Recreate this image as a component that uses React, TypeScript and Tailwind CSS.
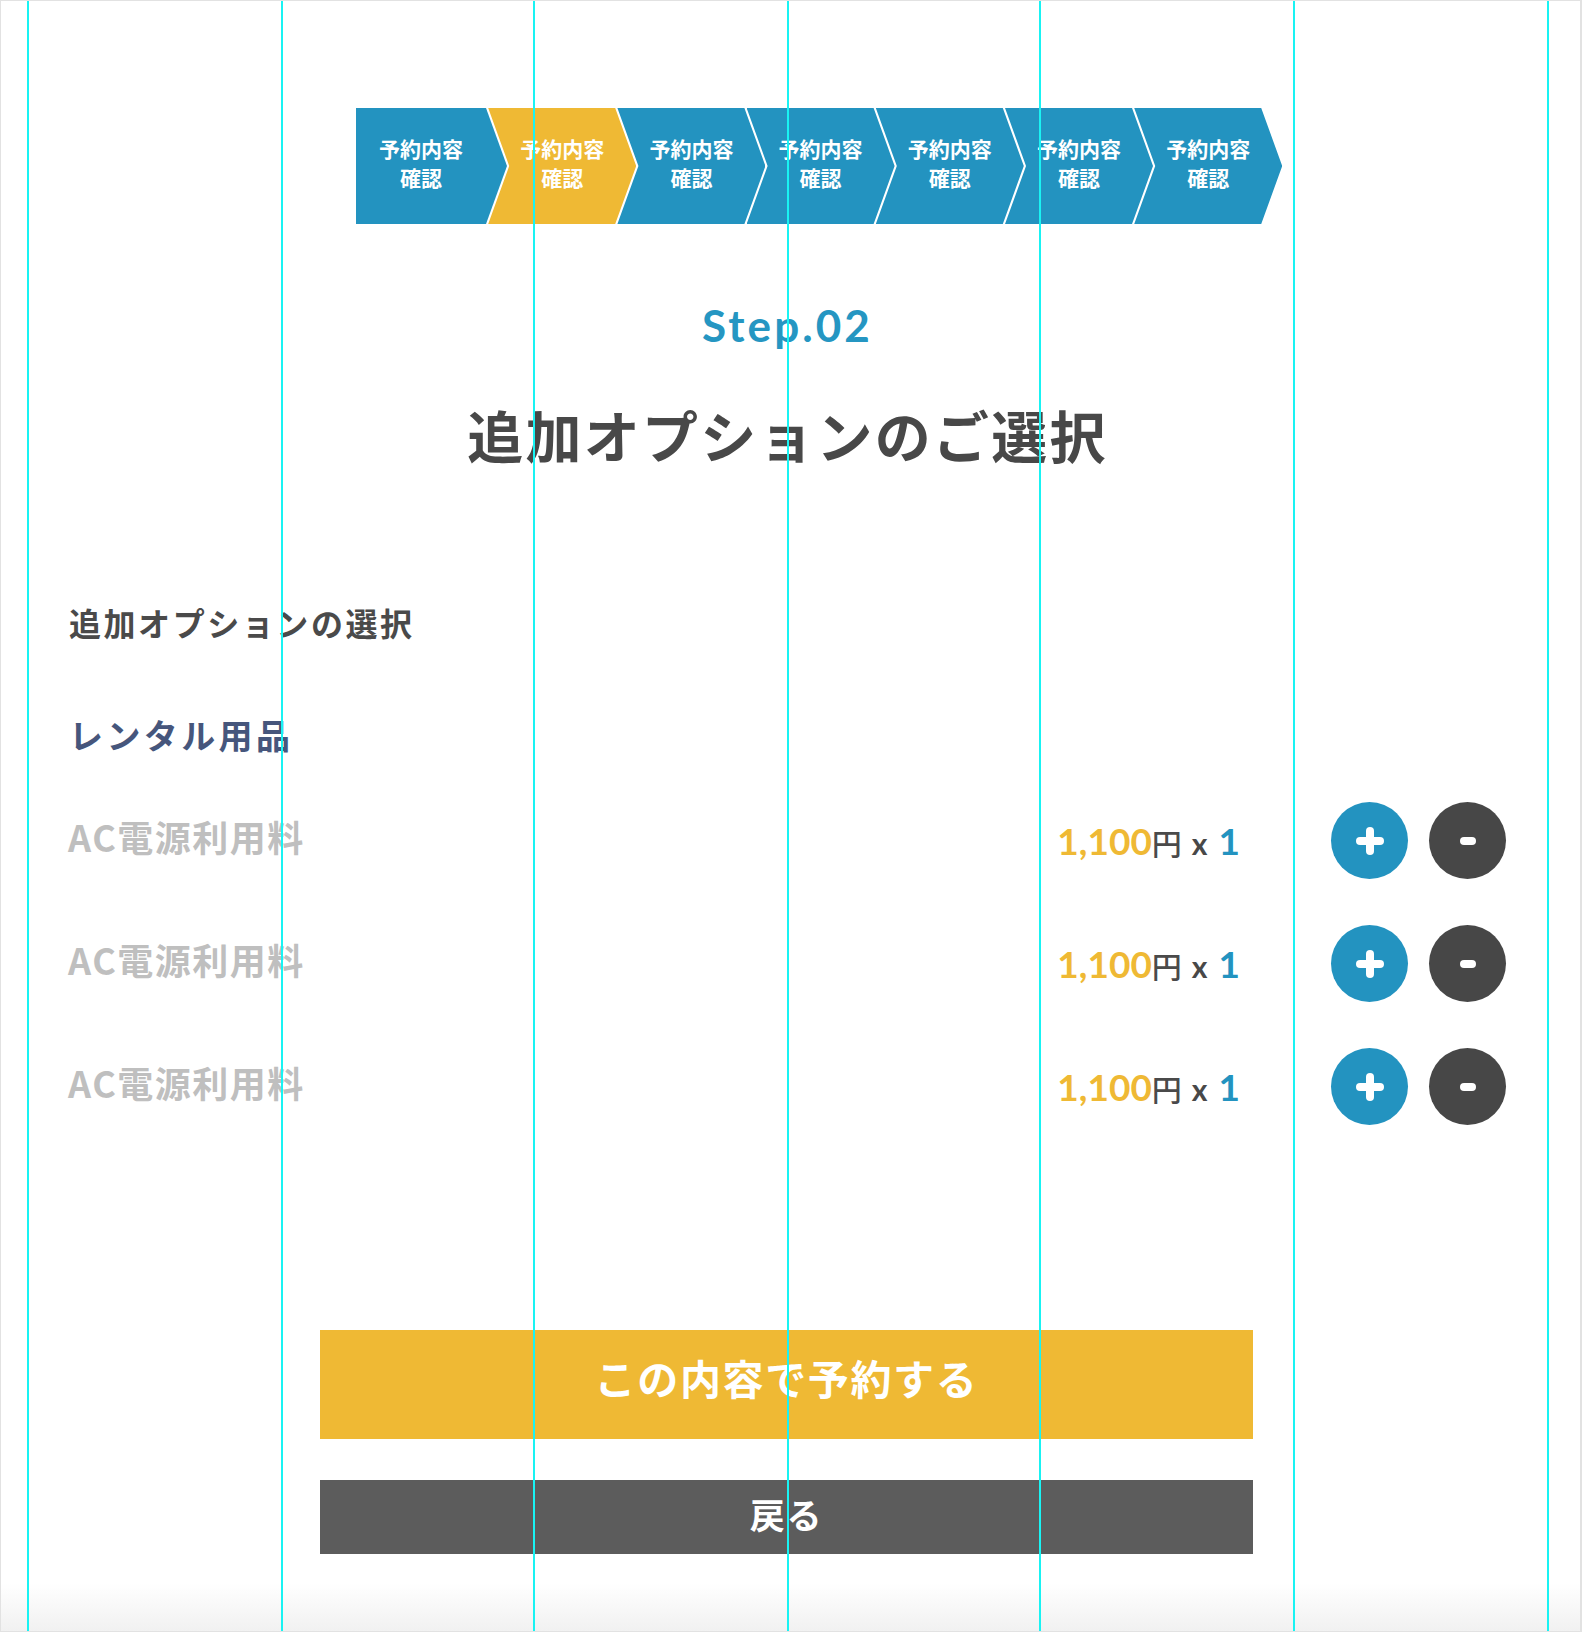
import React from 'react'

const jp = "font-['Noto_Sans_CJK_JP','Noto_Sans',sans-serif]"
const num = "font-['Lato','Noto_Sans_CJK_JP',sans-serif]"

// guide lines, offsets measured inside the 1px frame border
const guides = [26, 280, 532, 786, 1038, 1292, 1546]

const options = [
  { label: 'AC電源利用料', price: '1,100', qty: 1 },
  { label: 'AC電源利用料', price: '1,100', qty: 1 },
  { label: 'AC電源利用料', price: '1,100', qty: 1 },
]

function Stepper() {
  const steps = [0, 1, 2, 3, 4, 5, 6]
  return (
    <div className="flex h-[116px] ml-[355px] mt-[107px]">
      {steps.map((i) =>
        i === 0 ? (
          <div
            key={i}
            className={`w-[151px] h-full shrink-0 flex items-center justify-center pr-[21px] pb-[7px] bg-[#2393c0] [clip-path:polygon(0_0,130px_0,151px_50%,130px_100%,0_100%)] ${jp}`}
          >
            <span className="text-white text-[21px] leading-[29px] font-bold text-center">
              予約内容
              <br />
              確認
            </span>
          </div>
        ) : (
          <div
            key={i}
            className={`w-[148px] h-full shrink-0 -ml-[18.8px] flex items-center justify-center px-[21px] pb-[7px] ${
              i === 1 ? 'bg-[#efb934]' : 'bg-[#2393c0]'
            } [clip-path:polygon(0_0,127px_0,148px_50%,127px_100%,0_100%,21px_50%)] ${jp}`}
          >
            <span className="text-white text-[21px] leading-[29px] font-bold text-center">
              予約内容
              <br />
              確認
            </span>
          </div>
        )
      )}
    </div>
  )
}

function OptionRow({ label, price, qty }: { label: string; price: string; qty: number }) {
  return (
    <div className="flex items-center justify-between h-[77px]">
      <span className={`-ml-[1px] pb-[9px] text-[36px] leading-none font-bold tracking-[1.5px] text-[#bfbfbf] ${jp}`}>{label}</span>
      <div className="flex items-center">
        <div className="flex items-baseline">
          <span className={`text-[37px] leading-none font-bold text-[#efb934] ${num}`}>{price}</span>
          <span className={`text-[30px] leading-none font-medium text-[#4a4a4a] ${jp}`}>円</span>
          <span className={`ml-[10px] text-[30px] leading-none font-bold text-[#484848] ${num}`}>x</span>
          <span className={`ml-[11px] text-[37px] leading-none font-bold text-[#2393c0] ${num}`}>{qty}</span>
        </div>
        <div className="flex items-center gap-[21px] ml-[91px]">
          <button className="w-[77px] h-[77px] rounded-full bg-[#2393c0] flex items-center justify-center relative">
            <span className="absolute w-[28px] h-[8px] rounded-full bg-white" />
            <span className="absolute w-[8px] h-[28px] rounded-full bg-white" />
          </button>
          <button className="w-[77px] h-[77px] rounded-full bg-[#474747] flex items-center justify-center">
            <span className="w-[16px] h-[8px] rounded-full bg-white" />
          </button>
        </div>
      </div>
    </div>
  )
}

export default function App() {
  return (
    <div className="relative w-[1582px] h-[1632px] bg-white border-t border-l border-r-2 border-b border-[#e2e2e2] overflow-hidden">
      {/* bottom fade */}
      <div className="absolute left-0 right-0 bottom-0 h-[48px] bg-gradient-to-b from-white to-[#f1f1f1]" />

      <div className="relative">
        <Stepper />

        <p className={`mt-[79px] ml-[-6px] text-center text-[44px] leading-[44px] font-bold tracking-[0.07em] text-[#2596c2] ${num}`}>
          Step.02
        </p>

        <h1 className={`mt-[59px] ml-[-6px] text-center text-[56px] leading-[56px] font-bold tracking-[0.04em] text-[#484848] ${jp}`}>
          追加オプションのご選択
        </h1>

        <div className="ml-[68px] w-[1437px]">
          <h2 className={`mt-[144px] text-[32px] leading-[32px] font-bold tracking-[0.08em] text-[#4a4a4a] ${jp}`}>
            追加オプションの選択
          </h2>
          <h3 className={`mt-[80px] text-[34px] leading-[34px] font-bold tracking-[0.1em] text-[#46567c] ${jp}`}>
            レンタル用品
          </h3>

          <div className="mt-[50px] flex flex-col gap-[46px]">
            {options.map((o, i) => (
              <OptionRow key={i} label={o.label} price={o.price} qty={o.qty} />
            ))}
          </div>
        </div>

        <div className={`ml-[319px] w-[933px] ${jp}`}>
          <button className="mt-[205px] w-full h-[109px] pb-[14px] bg-[#efb934] text-white text-[41px] leading-none font-bold tracking-[0.04em]">
            この内容で予約する
          </button>
          <button className="mt-[41px] w-full h-[74px] pb-[8px] bg-[#5c5c5c] text-white text-[35px] leading-none font-bold tracking-[0.05em]">
            戻る
          </button>
        </div>
      </div>

      {/* layout guides */}
      {guides.map((x) => (
        <div key={x} className="absolute top-0 bottom-0 w-[2px] bg-[#19f3f3]" style={{ left: x }} />
      ))}
    </div>
  )
}
